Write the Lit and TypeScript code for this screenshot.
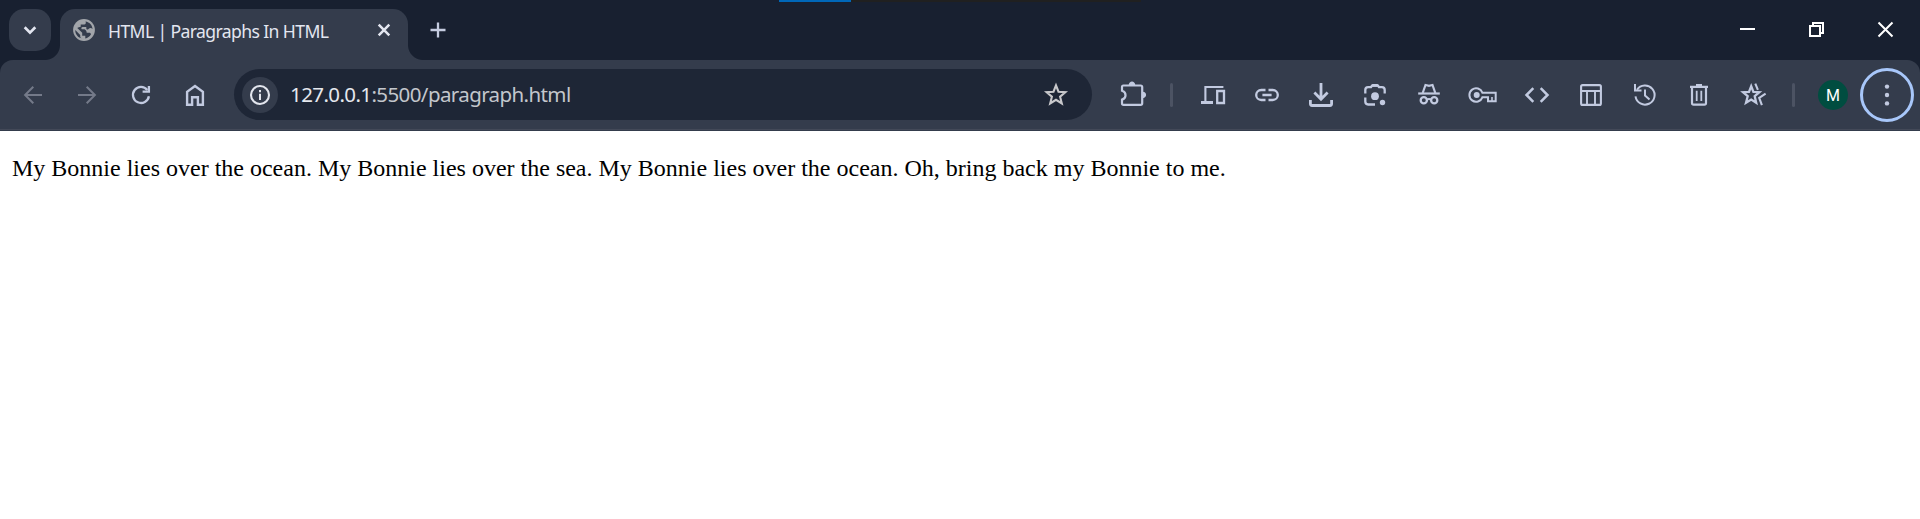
import { LitElement, html, css, svg } from "lit";
import { customElement, property } from "lit/decorators.js";

// Every glyph is drawn around the origin of a 54 x 54 cell.
const glyphs: Record<string, unknown> = {
  back: svg`<path d="M9 0H-7.5M.3-8.2L-7.9 0L.3 8.2"/>`,
  forward: svg`<path d="M-9 0H7.5M-.3-8.2L7.9 0L-.3 8.2"/>`,
  reload: svg`<path d="M6.3-5A8 8 0 1 0 7.9 1.2" stroke-width="2.3"/><path d="M7.9-9V-3.3H1.6" stroke-width="2.3"/>`,
  home: svg`<path d="M-7.9 9.7V-3.1L0-9L7.9-3.1V9.7H2.9V2.2H-2.9V9.7Z" stroke-width="2.4"/>`,
  info: svg`<circle r="9" stroke-width="2.1"/><path d="M0-1.2V5"/><path d="M0-5V-2.8"/>`,
  star: svg`<path d="M0-9.6L2.5-3.3L9.4-2.8L4.1 1.7L5.8 8.5L0 4.8L-5.8 8.5L-4.1 1.7L-9.4-2.8L-2.5-3.3Z" stroke-width="2.1"/>`,
  puzzle: svg`<path d="M-9.6-9.5H7.6Q9.2-9.5 9.2-7.9V8.2Q9.2 9.8 7.6 9.8H-9.4Q-11 9.8-11 8.2V4.6C-6.3 3.5-6.3-3.1-11-4.3V-7.9Q-11-9.5-9.6-9.5Z" stroke-width="2.2"/><path class="solid" d="M-4.3-10C-4-14.8 2-14.8 2.3-10ZM9.8-3.2C14.2-3 14.2 3 9.8 3.2Z"/>`,
  devices: svg`<path d="M10.4-8H-7.6V8" stroke-width="2.1"/><path d="M-12 7.5H0" stroke-width="3"/><path d="M4.2-4H11V8H4.2Z" stroke-width="2.3"/>`,
  link: svg`<path d="M-1.5-5H-5.8A5 5 0 0 0-5.8 5H-1.5M1.5-5H5.8A5 5 0 0 1 5.8 5H1.5M-4.6 0H4.6" stroke-width="2.3"/>`,
  download: svg`<path d="M0-12V4M-6.6-2.5L0 4.2L6.6-2.5" stroke-width="2.8"/><path d="M-10.6 5V8.8Q-10.6 10.5-9 10.5H9Q10.6 10.5 10.6 8.8V5" stroke-width="2.8"/>`,
  lens: svg`<path d="M-9.7-1.4V-5Q-9.7-7.8-6.9-7.8H-4L-3-9.4H3L4-7.8H6.9Q9.7-7.8 9.7-5V-1.4M-9.7 2.5V6.6Q-9.7 9.5-6.9 9.5H0" stroke-width="2.3"/><circle class="solid" cy="1.2" r="3.9"/><circle class="solid" cx="7.5" cy="7.5" r="2.7"/><path class="solid" d="M-4-8.2L-2.7-11H2.7L4-8.2Z"/>`,
  incognito: svg`<path d="M-10.8-1.5H10.8" stroke-width="2.2"/><path d="M-6.3-2L-3.5-10L0-9.2L3.5-10L6.3-2" stroke-width="2.2"/><circle cx="-5.2" cy="5.3" r="3.1" stroke-width="2.3"/><circle cx="5.2" cy="5.3" r="3.1" stroke-width="2.3"/><path d="M-2.5 4.6Q0 3.4 2.5 4.6"/>`,
  key: svg`<path d="M-.6-2.3A6.7 6.7 0 1 0-.6 2.3H5V6.2H12.7V-2.3Z" stroke-width="2"/><circle class="solid" cx="-6.3" r="3"/><path d="M9 2V6" stroke-width="1.6"/>`,
  code: svg`<path d="M-3.7-6.8L-10.5 0L-3.7 6.8M3.7-6.8L10.5 0L3.7 6.8" stroke-width="2.5"/>`,
  table: svg`<rect x="-9.9" y="-9.9" width="19.8" height="19.8" rx="1.5" stroke-width="2.1"/><path d="M-9.5-4H9.5M-4-4V9.5M4-4V9.5" stroke-width="1.9"/>`,
  history: svg`<path d="M-9.5 1.4A9.6 9.6 0 1 0-8-5.3" stroke-width="2"/><path d="M-10-11V-4.5H-3.5M0-5.6V.5L4.5 4.6"/>`,
  trash: svg`<path d="M-9-8.1H9M-3-10H3" stroke-width="2.2"/><path d="M-7-8V8Q-7 9.6-5.4 9.6H5.4Q7 9.6 7 8V-8" stroke-width="2.2"/><path d="M-2.3-4.3V6M2.3-4.3V6" stroke-width="1.8"/>`,
  stars: svg`<path d="M-1.8-8.8L.4-3.2L6.4-2.8L1.7 1.2L3.2 7.8L-1.8 4.5L-7 7.8L-5.3 1.2L-10-2.8L-4-3.2Z" stroke-width="2.3"/><path d="M2.3-11.3L4.9-5.2M12.6-1.4L6.2 2.8L8.9 10.2" stroke-width="2.1"/>`,
  dots: svg`<circle class="solid" cy="-8.4" r="2.2"/><circle class="solid" r="2.2"/><circle class="solid" cy="8.4" r="2.2"/>`,
  chevron: svg`<path d="M-5.3-2.7L0 2.6L5.3-2.7" stroke-width="2.7"/>`,
  globe: svg`<circle class="solid" r="10.9"/><path class="gap" d="M-8.7.1L-3.8 4.9V6.5C-3.8 7.7-2.8 8-1.8 8.5C-5.8 8-9.1 4.3-8.7.1ZM1.5-8.6C5.5-8 8.2-5 8.6-1C7.4-2.1 5.7-2.3 4.5-1C3.4 0 2.3-.5 2.3-1.8V-2.9H-1.3C-2.6-2.9-3-1.6-2.3-.7H.6C2 .5 2.7 1.2 2.7 2.8H5.2C6.3 2.8 6.8 3.5 7 4.3C5.5 6.8 3.7 8 1.3 8.5V5.8H-1.8V2.8L-6.7-2.1C-5.7-3-4.3-3-3.3-3.3V-5.4H.2C1.6-5.7 2.4-7 1.5-8.6Z"/>`,
  close: svg`<path d="M-5.3-5.3L5.3 5.3M5.3-5.3L-5.3 5.3" stroke-width="2.5"/>`,
  plus: svg`<path d="M-7.5 0H7.5M0-7.5V7.5" stroke-width="2.3"/>`,
  minimize: svg`<path d="M-7 0H8"/>`,
  restore: svg`<path d="M-6-3H4V7H-6ZM-3-4V-6H7V4H5"/>`,
  exit: svg`<path d="M-6.5-6.5L7.5 7.5M7.5-6.5L-6.5 7.5"/>`,
};

@customElement("chrome-icon")
class ChromeIcon extends LitElement {
  @property() name = "";
  static styles = css`
    :host { display: block; width: 54px; height: 54px; flex: none; }
    svg { display: block; width: 100%; height: 100%; fill: none; stroke: currentColor; stroke-width: 2; overflow: visible; }
    .solid { fill: currentColor; stroke: none; }
    .gap { fill: #343c4c; stroke: none; }
  `;
  render() {
    return html`<svg viewBox="-27 -27 54 54" aria-hidden="true">${glyphs[this.name]}</svg>`;
  }
}

const tools = ["devices", "link", "download", "lens", "incognito", "key", "code", "table", "history", "trash", "stars"];

@customElement("app-root")
class AppRoot extends LitElement {
  static styles = css`
    :host { display: block; height: 519px; overflow: hidden; background: #fff; position: relative; font-family: "Noto Sans", "Open Sans", sans-serif; }
    .strip { display: flex; height: 60px; background: #182030; box-sizing: border-box; padding: 9px 0 0 9px; }
    .search, .favicon, .shut, .new, .site, .profile, .menu { display: flex; align-items: center; justify-content: center; flex: none; }
    .search { width: 42px; height: 42px; border-radius: 15px; background: #343c4c; color: #e3e6f0; margin-right: 9px; }
    .tab { position: relative; display: flex; width: 348px; height: 51px; border-radius: 15px 15px 0 0; background: #343c4c; color: #e3e6f0; }
    .tab::before, .tab::after { content: ""; position: absolute; bottom: 0; width: 15px; height: 15px; }
    .tab::before { right: 100%; background: radial-gradient(circle at 0 0, transparent 14.5px, #343c4c 15.5px); }
    .tab::after { left: 100%; background: radial-gradient(circle at 100% 0, transparent 14.5px, #343c4c 15.5px); }
    .favicon { width: 48px; height: 42px; color: #a2a5aa; }
    .title { flex: 1; font-size: 17.6px; line-height: 44px; letter-spacing: -.62px; white-space: nowrap; }
    .shut { width: 48px; height: 42px; }
    .new { width: 60px; height: 42px; color: #c5cce0; }
    .windows { display: flex; margin-left: auto; height: 40px; align-items: center; color: #fff; }
    .win { width: 69px; box-sizing: border-box; padding-left: 7px; }
    .progress { position: absolute; top: 0; left: 779px; display: flex; width: 362px; height: 2px; background: #202020; }
    .done { width: 72px; background: #0067b8; }
    .frame { background: #182030; }
    .toolbar { display: flex; align-items: flex-start; height: 71px; box-sizing: border-box; padding: 8px 6px 0; border-radius: 13px 13px 0 0; color: #c2cae0;
      background: linear-gradient(#343c4c 69px, #434958 69px, #434958 70px, #343c4c 70px); }
    .dim { color: #747a89; }
    .omnibox { display: flex; align-items: flex-start; width: 858px; height: 51px; margin: 1px 14px 0 12px; padding: 0 9px 0 8px; box-sizing: border-box; border-radius: 26px; background: #1e2636; }
    .site { width: 36px; height: 36px; margin-top: 8px; border-radius: 50%; background: #343c4c; color: #e3e6ee; }
    .url { flex: 1; margin-left: 12px; font-size: 20.5px; line-height: 51px; letter-spacing: -.6px; color: #c3c6cc; white-space: nowrap; }
    .host { color: #e6e8ee; }
    .mark { color: #c8c8cb; margin-top: -1px; }
    .rule { width: 3px; height: 24px; border-radius: 2px; background: #4c5363; margin: 15px 13px 0 10px; }
    .rule.last { margin: 15px 11px 0 12px; }
    .profile { width: 54px; height: 54px; }
    .avatar { width: 30px; height: 30px; border-radius: 50%; background: #004d40; color: #fff; font: 16px/31px Roboto, sans-serif; text-align: center; }
    .menu { width: 54px; height: 54px; box-sizing: border-box; border: 3px solid #a8c7fa; border-radius: 50%; }
    .page { padding: 0 12px; font: 24px/27px "Liberation Serif", serif; color: #000; }
    p { margin: 24px 0; }
  `;
  render() {
    return html`
      <div class="strip">
        <div class="search"><chrome-icon name="chevron"></chrome-icon></div>
        <div class="tab">
          <div class="favicon"><chrome-icon name="globe"></chrome-icon></div>
          <div class="title">HTML | Paragraphs In HTML</div>
          <div class="shut"><chrome-icon name="close"></chrome-icon></div>
        </div>
        <div class="new"><chrome-icon name="plus"></chrome-icon></div>
        <div class="windows">
          ${["minimize", "restore", "exit"].map((n) => html`<div class="win"><chrome-icon name=${n}></chrome-icon></div>`)}
        </div>
      </div>
      <div class="progress"><div class="done"></div></div>
      <div class="frame">
        <div class="toolbar">
          <chrome-icon class="dim" name="back"></chrome-icon>
          <chrome-icon class="dim" name="forward"></chrome-icon>
          <chrome-icon name="reload"></chrome-icon>
          <chrome-icon name="home"></chrome-icon>
          <div class="omnibox">
            <div class="site"><chrome-icon name="info"></chrome-icon></div>
            <div class="url"><span class="host">127.0.0.1</span>:5500/paragraph.html</div>
            <chrome-icon class="mark" name="star"></chrome-icon>
          </div>
          <chrome-icon name="puzzle"></chrome-icon>
          <div class="rule"></div>
          ${tools.map((n) => html`<chrome-icon name=${n}></chrome-icon>`)}
          <div class="rule last"></div>
          <div class="profile"><div class="avatar">M</div></div>
          <div class="menu"><chrome-icon name="dots"></chrome-icon></div>
        </div>
      </div>
      <div class="page">
        <p>My Bonnie lies over the ocean. My Bonnie lies over the sea. My Bonnie lies over the ocean. Oh, bring back my Bonnie to me.</p>
      </div>
    `;
  }
}
